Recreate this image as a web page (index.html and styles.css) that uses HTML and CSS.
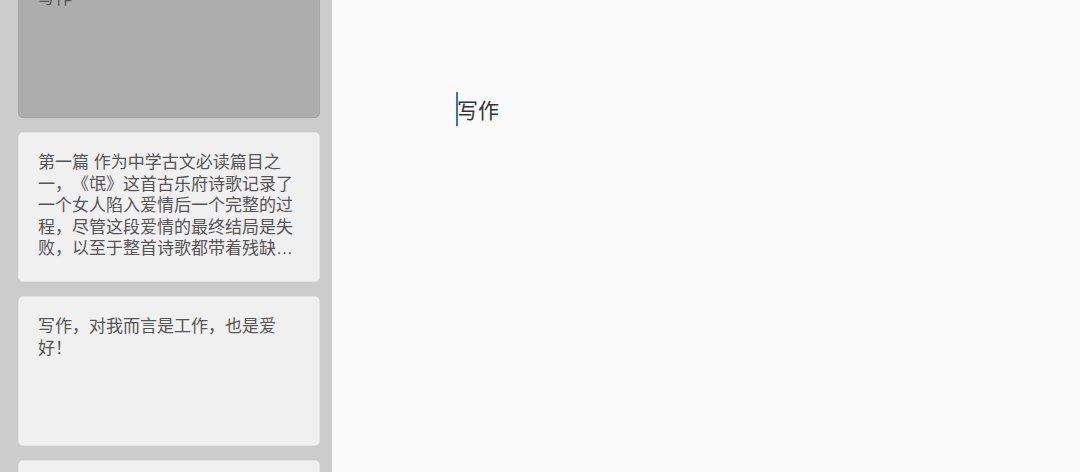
FILE: index.html
```html
<!DOCTYPE html>
<html lang="zh-CN">
<head>
    <meta charset="UTF-8">
    <meta name="viewport" content="width=device-width, initial-scale=1.0">
    <title>写作</title>
    <link rel="stylesheet" href="styles.css">
</head>
<body>
    <div class="app">
        <aside class="sidebar">
            <div class="note-list">
                <div class="note-card active">
                    <p class="note-text">写作</p>
                </div>
                <div class="note-card">
                    <p class="note-text">第一篇 作为中学古文必读篇目之一，《氓》这首古乐府诗歌记录了一个女人陷入爱情后一个完整的过程，尽管这段爱情的最终结局是失败，以至于整首诗歌都带着残缺的美感，读来令人唏嘘不已。</p>
                </div>
                <div class="note-card">
                    <p class="note-text">写作，对我而言是工作，也是爱好！</p>
                </div>
                <div class="note-card">
                    <p class="note-text"></p>
                </div>
            </div>
        </aside>
        <main class="editor">
            <div class="editor-line"><span class="caret"></span>写作</div>
        </main>
    </div>
</body>
</html>
```

FILE: styles.css
```css
* {
    margin: 0;
    padding: 0;
    box-sizing: border-box;
    font-family: 'Liberation Sans', 'Noto Sans CJK SC', sans-serif;
}

body {
    width: 1080px;
    height: 472px;
    overflow: hidden;
    background-color: #FAFAFA;
    text-spacing-trim: space-all;
}

.app {
    display: flex;
    height: 100%;
}

.sidebar {
    width: 332px;
    flex-shrink: 0;
    background-color: #CCCCCC;
    overflow: hidden;
}

.note-list {
    display: flex;
    flex-direction: column;
    gap: 14px;
    padding: 0 12px 0 18px;
    margin-top: -32px;
}

.note-card {
    height: 150px;
    flex-shrink: 0;
    padding: 19px 19px 0 19px;
    background-color: #F0F0F0;
    border: 1px solid #E4E4E4;
    border-radius: 5px;
}

.note-card.active {
    background-color: #ADADAD;
    border-color: #A6A6A6;
}

.note-text {
    font-size: 17px;
    line-height: 21.5px;
    color: #555555;
    display: -webkit-box;
    -webkit-line-clamp: 5;
    -webkit-box-orient: vertical;
    overflow: hidden;
}

.editor {
    flex: 1;
    padding: 92px 0 0 124px;
}

.editor-line {
    display: flex;
    align-items: center;
    height: 34px;
    font-size: 21px;
    color: #333333;
}

.caret {
    width: 2px;
    height: 34px;
    background-color: #3B6FD8;
    margin-right: -1px;
}
```
